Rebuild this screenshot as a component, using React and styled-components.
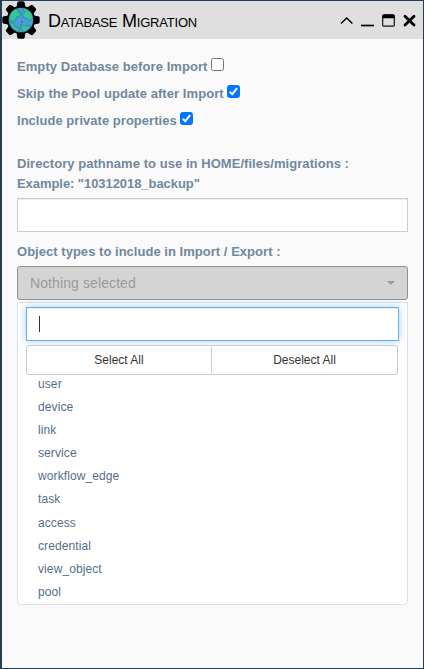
import React from 'react';
import styled, { createGlobalStyle } from 'styled-components';

const GlobalStyle = createGlobalStyle`
  * { box-sizing: border-box; }
  body { margin: 0; background: #263d56; font-family: "Liberation Sans", Arial, sans-serif; }
`;

const Panel = styled.main`
  width: 424px;
  height: 669px;
  border: 1px solid #263d56;
  border-left-width: 2px;
  background: #fafafa;
  overflow: hidden;
`;

const TitleBar = styled.header`
  height: 38px;
  display: flex;
  align-items: center;
  background: #dfdfdf;
`;

const Logo = styled.svg`
  width: 38px;
  height: 38px;
  flex: none;
`;

const Title = styled.h1`
  margin: 1px 0 0 8px;
  flex: 1;
  font-size: 18px;
  line-height: 24px;
  font-weight: 400;
  font-variant: small-caps;
  letter-spacing: -0.22px;
  color: #000;
`;

const Controls = styled.svg`
  width: 80px;
  height: 38px;
  flex: none;
  margin-right: 3px;
`;

const Form = styled.form`
  padding: 14px 15px 0;
`;

const CheckRow = styled.label`
  display: flex;
  align-items: center;
  height: 27px;
  font-size: 13px;
  font-weight: 700;
  letter-spacing: ${(p) => p.$spacing || '0'};
  color: #70889e;
`;

const Check = styled.input`
  appearance: none;
  width: 13px;
  height: 13px;
  margin: -4px 0 0 3px;
  border: 1px solid #767676;
  border-radius: 2.5px;
  background: #fff;
  &:checked {
    border-color: #0075ff;
    background: #0075ff url("data:image/svg+xml,%3Csvg xmlns='http://www.w3.org/2000/svg' viewBox='0 0 11 11'%3E%3Cpath d='M1.8 5.8 4.2 8.2 9.1 2.1' fill='none' stroke='white' stroke-width='2'/%3E%3C/svg%3E") center / 11px 11px;
  }
`;

const FieldLabel = styled.label`
  display: block;
  margin-top: ${(p) => p.$top};
  font-size: 13px;
  line-height: 20px;
  font-weight: 700;
  letter-spacing: 0.03px;
  color: #70889e;
`;

const LabelLine = styled.span`
  display: block;
  letter-spacing: ${(p) => p.$spacing};
`;

const TextInput = styled.input`
  display: block;
  width: 100%;
  height: 34px;
  margin-top: 4px;
  padding: 6px 12px;
  border: 1px solid #ccc;
  border-radius: 0;
  background: #fff;
  box-shadow: inset 0 1px 1px rgba(0, 0, 0, 0.075);
  outline: none;
`;

const SelectButton = styled.button`
  display: flex;
  align-items: center;
  justify-content: space-between;
  width: 100%;
  height: 34px;
  margin-top: 4px;
  padding: 0 12px;
  border: 1px solid #919191;
  border-radius: 3px;
  background: #d4d4d4;
  color: #999;
  font: 14px "Liberation Sans", Arial, sans-serif;
  letter-spacing: 0.1px;
`;

const Caret = styled.span`
  border: 4px solid transparent;
  border-top-color: #999;
  border-bottom: 0;
`;

const Menu = styled.section`
  height: 303px;
  margin-top: 2px;
  padding: 4px 8px 0;
  border: 1px solid #dcdfe6;
  border-radius: 0 0 4px 4px;
  background: #fff;
`;

const SearchBox = styled.div`
  display: flex;
  align-items: center;
  height: 34px;
  padding-left: 12px;
  border: 1px solid #66afe9;
  background: #fff;
  box-shadow: inset 0 1px 1px rgba(0, 0, 0, 0.075), 0 0 8px rgba(102, 175, 233, 0.6);
`;

const TextCursor = styled.span`
  width: 1px;
  height: 16px;
  background: #333;
`;

const ButtonGroup = styled.div`
  display: grid;
  grid-template-columns: 186px 186px;
  height: 30px;
  margin: 4px 1px 0 0;
`;

const ActionButton = styled.button`
  padding: 0;
  border: 1px solid #ccc;
  border-left-width: ${(p) => (p.$last ? 0 : '1px')};
  border-radius: ${(p) => (p.$last ? '0 3px 3px 0' : '3px 0 0 3px')};
  background: #fff;
  color: #333;
  font: 12px "Liberation Sans", Arial, sans-serif;
`;

const Options = styled.ul`
  margin: -2.2px 0 0;
  padding: 0 0 0 12px;
  list-style: none;
`;

const Option = styled.li`
  height: 23.14px;
  font-size: 12px;
  line-height: 23px;
  letter-spacing: 0.1px;
  color: #546e8a;
`;

const types = ['user', 'device', 'link', 'service', 'workflow_edge', 'task', 'access', 'credential', 'view_object', 'pool'];
const teeth = [0, 45, 90, 135, 180, 225, 270, 315];

function GearGlobe() {
  return (
    <Logo viewBox="0 0 38 38" aria-hidden="true">
      {teeth.map((angle) => (
        <path key={angle} transform={`rotate(${angle} 19 19)`} fill="#000" d="M14.5 7 15.3 1.8Q15.6.3 17 .3h4Q22.4.3 22.7 1.8L23.5 7Z" />
      ))}
      <circle cx="19" cy="19" r="14.2" fill="#000" />
      <circle cx="19" cy="19" r="12.3" fill="#479fdc" />
      <g fill="#37c39b" stroke="#286b7c" strokeWidth=".5" strokeLinejoin="round">
        <path d="M7 18.5Q7.5 11 13.5 8l4 .5-1.5 2.5 3 1-1.5 3.5-3 .8-1 3-2.5 1.5Z" />
        <path d="M20 6.9q6 .5 9.500 5.500l1.500 5.100-3.500 2-3-2-3-1-1.500-3.500 3-2Z" />
        <path d="m7.500 21.500 4 1 1.500 3 4 1.500.5 4Q10 29.500 7.500 21.500Z" />
        <path d="m18.500 23.500 4 1.500 3.500-.5 2.500.5q-2.500 5-7 6L19 27.500Z" />
      </g>
      <circle cx="20" cy="21" r=".8" fill="#264f64" />
    </Logo>
  );
}

function WindowControls() {
  return (
    <Controls viewBox="340 1 80 38" aria-label="Window controls">
      <path d="m341 23.5 5.7-5.6 5.7 5.6" fill="none" stroke="#000" strokeWidth="1.4" />
      <path d="M361 25.5h13" stroke="#000" strokeWidth="1.7" />
      <rect x="382.7" y="15" width="11.6" height="11.2" rx="1.3" fill="none" stroke="#111" strokeWidth="1.2" />
      <path d="M382.2 18.2v-2q0-2 2-2h8.6q2 0 2 2v2z" />
      <path d="m405 16.2 9 8.8m0-8.8-9 8.8" stroke="#000" strokeWidth="2.8" strokeLinecap="round" />
    </Controls>
  );
}

export default function App() {
  return (
    <>
      <GlobalStyle />
      <Panel>
        <TitleBar>
          <GearGlobe />
          <Title>Database Migration</Title>
          <WindowControls />
        </TitleBar>
        <Form>
          <CheckRow $spacing="0.07px">Empty Database before Import<Check type="checkbox" /></CheckRow>
          <CheckRow $spacing="0.07px">Skip the Pool update after Import<Check type="checkbox" defaultChecked /></CheckRow>
          <CheckRow $spacing="0.03px">Include private properties<Check type="checkbox" defaultChecked /></CheckRow>
          <FieldLabel $top="20px">
            <LabelLine $spacing="0.05px">Directory pathname to use in HOME/files/migrations :</LabelLine>
            <LabelLine $spacing="-0.06px">Example: "10312018_backup"</LabelLine>
          </FieldLabel>
          <TextInput aria-label="Directory pathname" />
          <FieldLabel $top="10px">Object types to include in Import / Export :</FieldLabel>
          <SelectButton type="button">Nothing selected<Caret /></SelectButton>
          <Menu>
            <SearchBox><TextCursor /></SearchBox>
            <ButtonGroup>
              <ActionButton type="button">Select All</ActionButton>
              <ActionButton type="button" $last>Deselect All</ActionButton>
            </ButtonGroup>
            <Options>{types.map((type) => <Option key={type}>{type}</Option>)}</Options>
          </Menu>
        </Form>
      </Panel>
    </>
  );
}
